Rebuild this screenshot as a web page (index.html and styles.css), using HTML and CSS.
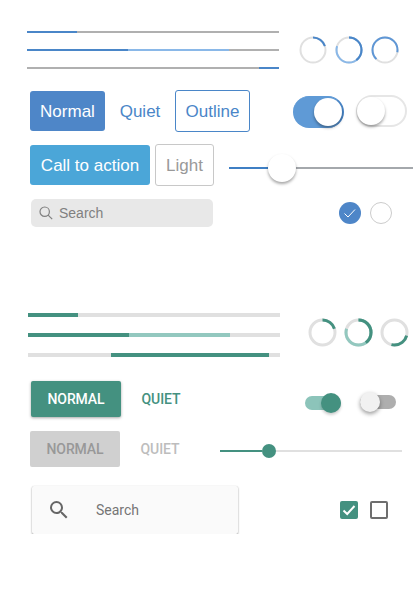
FILE: index.html
```html
<!DOCTYPE html>
<html lang="en">
<head>
<meta charset="UTF-8">
<meta name="viewport" content="width=device-width, initial-scale=1.0">
<title>UI kit</title>
<link rel="stylesheet" href="styles.css">
</head>
<body>

<!-- blue kit -->
<section class="kit kit-blue">
    <div class="row row-progress">
        <div class="bars">
            <div class="bar"><span class="fill" style="width:50px"></span></div>
            <div class="bar"><span class="fill" style="width:101px"></span><span class="fill-soft" style="width:101px"></span></div>
            <div class="bar bar-end"><span class="fill" style="width:20px"></span></div>
        </div>
        <div class="rings">
            <svg class="ring" viewBox="0 0 28 28"><circle class="ring-bg" cx="14" cy="14" r="12.5"/><circle class="ring-main" cx="14" cy="14" r="12.5" pathLength="100" stroke-dasharray="20 80"/></svg>
            <svg class="ring" viewBox="0 0 28 28"><circle class="ring-bg" cx="14" cy="14" r="12.5"/><circle class="ring-soft" cx="14" cy="14" r="12.5" pathLength="100" stroke-dasharray="80 20"/><circle class="ring-main" cx="14" cy="14" r="12.5" pathLength="100" stroke-dasharray="40 60"/></svg>
            <svg class="ring" viewBox="0 0 28 28"><circle class="ring-bg" cx="14" cy="14" r="12.5"/><circle class="ring-mid" cx="14" cy="14" r="12.5" pathLength="100" stroke-dasharray="66 34" stroke-dashoffset="-62"/></svg>
        </div>
    </div>

    <div class="row row-buttons">
        <button class="btn btn-normal">Normal</button>
        <button class="btn btn-quiet">Quiet</button>
        <button class="btn btn-outline">Outline</button>
        <div class="toggle toggle-on"><span class="knob"></span></div>
        <div class="toggle toggle-off"><span class="knob"></span></div>
    </div>

    <div class="row row-cta">
        <button class="btn btn-cta">Call to action</button>
        <button class="btn btn-light">Light</button>
        <div class="slider"><span class="slider-fill"></span><span class="slider-knob"></span></div>
    </div>

    <div class="row row-search">
        <div class="search">
            <svg class="search-icon" viewBox="0 0 14 14"><circle cx="5.7" cy="5.7" r="4.7"/><line x1="9.1" y1="9.1" x2="13.2" y2="13.2"/></svg>
            <span>Search</span>
        </div>
        <span class="radio radio-on"><svg viewBox="0 0 22 22"><polyline points="5.5,11.5 9,15 16,7.5"/></svg></span>
        <span class="radio"></span>
    </div>
</section>

<!-- green kit -->
<section class="kit kit-green">
    <div class="row row-progress">
        <div class="bars">
            <div class="bar"><span class="fill" style="width:50px"></span></div>
            <div class="bar"><span class="fill" style="width:101px"></span><span class="fill-soft" style="width:101px"></span></div>
            <div class="bar"><span class="fill" style="width:158px;margin-left:83px"></span></div>
        </div>
        <div class="rings">
            <svg class="ring" viewBox="0 0 29 29"><circle class="ring-bg" cx="14.5" cy="14.5" r="12.5"/><circle class="ring-main" cx="14.5" cy="14.5" r="12.5" pathLength="100" stroke-dasharray="20 80"/></svg>
            <svg class="ring" viewBox="0 0 29 29"><circle class="ring-bg" cx="14.5" cy="14.5" r="12.5"/><circle class="ring-soft" cx="14.5" cy="14.5" r="12.5" pathLength="100" stroke-dasharray="80 20"/><circle class="ring-main" cx="14.5" cy="14.5" r="12.5" pathLength="100" stroke-dasharray="40 60"/></svg>
            <svg class="ring" viewBox="0 0 29 29"><circle class="ring-bg" cx="14.5" cy="14.5" r="12.5"/><circle class="ring-main" cx="14.5" cy="14.5" r="12.5" pathLength="100" stroke-dasharray="25 75" stroke-dashoffset="-29"/></svg>
        </div>
    </div>

    <div class="row row-buttons">
        <button class="btn btn-normal">NORMAL</button>
        <button class="btn btn-quiet">QUIET</button>
        <div class="switch switch-on"><span class="knob"></span></div>
        <div class="switch switch-off"><span class="knob"></span></div>
    </div>

    <div class="row row-disabled">
        <button class="btn btn-disabled">NORMAL</button>
        <button class="btn btn-quiet-disabled">QUIET</button>
        <div class="slider"><span class="slider-fill"></span><span class="slider-knob"></span></div>
    </div>

    <div class="row row-search">
        <div class="search">
            <svg class="search-icon" viewBox="0 0 24 24"><path d="M15.5 14h-.79l-.28-.27A6.471 6.471 0 0 0 16 9.5 6.5 6.5 0 1 0 9.5 16c1.61 0 3.09-.59 4.23-1.57l.27.28v.79l5 4.99L20.49 19l-4.99-5zm-6 0C7.01 14 5 11.99 5 9.5S7.01 5 9.5 5 14 7.01 14 9.5 11.99 14 9.5 14z"/></svg>
            <span>Search</span>
        </div>
        <span class="check check-on"><svg viewBox="0 0 18 18"><polyline points="3.5,9.5 7.2,13 14.5,5"/></svg></span>
        <span class="check"></span>
    </div>
</section>

</body>
</html>
```

FILE: styles.css
```css
body {
    margin: 0;
    background: #fff;
    font-family: "Liberation Sans", Arial, sans-serif;
}
.row {
    display: flex;
    align-items: flex-start;
}
button {
    border: none;
    padding: 0;
    background: none;
    font-family: inherit;
}
.btn {
    display: block;
    flex: none;
    text-align: center;
}

/* progress, shared */
.bars {
    display: flex;
    flex-direction: column;
    flex: none;
    width: 252px;
}
.bar {
    display: flex;
}
.bar-end {
    justify-content: flex-end;
}
.rings {
    display: flex;
}
.ring {
    display: block;
    flex: none;
    transform: rotate(-90deg);
    fill: none;
}
.slider {
    position: relative;
    flex: none;
}
.slider-fill {
    display: block;
    height: 100%;
}
.slider-knob,
.knob {
    position: absolute;
    border-radius: 50%;
}
.search {
    display: flex;
    align-items: center;
    flex: none;
}

/* blue kit */
.kit-blue {
    padding-top: 31px;
}
.kit-blue .row-progress {
    padding-left: 27px;
}
.kit-blue .bars {
    gap: 16px;
}
.kit-blue .bar {
    height: 2px;
    background: #b0b0b0;
}
.kit-blue .fill {
    background: #4a86c8;
}
.kit-blue .fill-soft {
    background: #8ab8e8;
}
.kit-blue .rings {
    gap: 8px;
    margin: 5px 0 0 20px;
}
.kit-blue .ring {
    width: 28px;
    height: 28px;
    stroke-width: 2px;
}
.kit-blue .ring-bg {
    stroke: #e0e0e0;
}
.kit-blue .ring-main {
    stroke: #4a86c8;
}
.kit-blue .ring-soft {
    stroke: #8ab8e8;
}
.kit-blue .ring-mid {
    stroke: #5f97d6;
}
.kit-blue .row-buttons {
    margin-top: 21px;
    padding-left: 30px;
}
.kit-blue .btn {
    padding-top: 1px;
    font-size: 17px;
    border-radius: 3px;
}
.kit-blue .btn-normal {
    width: 75px;
    height: 40px;
    margin-top: 1px;
    background: #4e86c8;
    color: #fff;
}
.kit-blue .btn-quiet {
    width: 70px;
    height: 40px;
    margin-top: 1px;
    color: #4a86c8;
}
.kit-blue .btn-outline {
    width: 75px;
    height: 42px;
    border: 1px solid #4a86c8;
    color: #4a86c8;
}
.toggle {
    position: relative;
    flex: none;
    box-sizing: border-box;
    height: 32px;
    border-radius: 16px;
}
.toggle-on {
    width: 51px;
    margin: 6px 0 0 43px;
    background: #5f9ad6;
    border-right: 2px solid #4a86c8;
    border-top: 1px solid #5f9ad6;
}
.toggle-on .knob {
    top: 1px;
    left: 21px;
    width: 28px;
    height: 28px;
    background: #fff;
    box-shadow: 0 2px 3px rgba(0, 0, 0, 0.35);
}
.toggle-off {
    width: 51px;
    margin: 5px 0 0 12px;
    background: #fff;
    border: 2px solid #e6e6e6;
}
.toggle-off .knob {
    top: 0;
    left: -1px;
    width: 28px;
    height: 28px;
    background: #fff;
    box-shadow: 0 2px 3px rgba(0, 0, 0, 0.35);
}
.kit-blue .row-cta {
    margin-top: 12px;
    padding-left: 30px;
}
.kit-blue .btn-cta {
    width: 120px;
    height: 40px;
    margin-top: 1px;
    background: #4ba6d8;
    color: #fff;
}
.kit-blue .btn-light {
    width: 59px;
    height: 42px;
    margin-left: 5px;
    border: 1px solid #c8c8c8;
    color: #999;
}
.kit-blue .slider {
    width: 184px;
    height: 2px;
    margin: 23px 0 0 15px;
    background: #a4a8ac;
}
.kit-blue .slider-fill {
    width: 40px;
    background: #3f7fc4;
}
.kit-blue .slider-knob {
    top: -13px;
    left: 39px;
    width: 28px;
    height: 28px;
    background: #fff;
    box-shadow: 0 2px 3px rgba(0, 0, 0, 0.35);
}
.kit-blue .row-search {
    margin-top: 13px;
    padding-left: 31px;
}
.kit-blue .search {
    width: 182px;
    height: 28px;
    box-sizing: border-box;
    padding-left: 8px;
    background: #e8e8e8;
    border-radius: 5px;
    color: #808080;
    font-size: 14px;
}
.kit-blue .search-icon {
    width: 14px;
    height: 14px;
    margin-right: 6px;
    fill: none;
    stroke: #808080;
    stroke-width: 1.2px;
}
.radio {
    flex: none;
    box-sizing: border-box;
    width: 22px;
    height: 22px;
    margin: 3px 0 0 9px;
    background: #fff;
    border: 1px solid #ccc;
    border-radius: 50%;
}
.radio-on {
    margin-left: 126px;
    background: #4e86c8;
    border: none;
}
.radio svg {
    display: block;
    fill: none;
    stroke: #fff;
    stroke-width: 1px;
}

/* green kit */
.kit-green {
    padding-top: 86px;
    font-family: Roboto, sans-serif;
}
.kit-green .row-progress {
    padding-left: 28px;
}
.kit-green .bars {
    gap: 16px;
}
.kit-green .bar {
    height: 4px;
    background: #e0e0e0;
}
.kit-green .fill {
    background: #449180;
}
.kit-green .fill-soft {
    background: #93c8bf;
}
.kit-green .rings {
    gap: 7px;
    margin: 5px 0 0 28px;
}
.kit-green .ring {
    width: 29px;
    height: 29px;
    stroke-width: 3px;
}
.kit-green .ring-bg {
    stroke: #e0e0e0;
}
.kit-green .ring-main {
    stroke: #449180;
}
.kit-green .ring-soft {
    stroke: #93c8bf;
}
.kit-green .row-buttons {
    margin-top: 24px;
    padding-left: 31px;
}
.kit-green .btn {
    height: 36px;
    font-size: 14px;
    font-weight: 500;
    letter-spacing: -0.1px;
    border-radius: 2px;
}
.kit-green .btn-normal {
    width: 90px;
    background: #449180;
    color: #fff;
    box-shadow: 0 1px 3px rgba(0, 0, 0, 0.35);
}
.kit-green .btn-quiet {
    width: 80px;
    color: #449180;
}
.switch {
    position: relative;
    flex: none;
    width: 36px;
    height: 14px;
    border-radius: 7px;
}
.switch .knob {
    top: -3px;
    width: 20px;
    height: 20px;
}
.switch-on {
    margin: 15px 0 0 104px;
    background: #8cc4ba;
}
.switch-on .knob {
    right: 0;
    background: #449180;
    box-shadow: 0 2px 3px rgba(0, 0, 0, 0.2);
}
.switch-off {
    margin: 14px 0 0 19px;
    background: #aeaeae;
}
.switch-off .knob {
    left: 0;
    background: #f1f1f1;
    box-shadow: 0 2px 4px rgba(0, 0, 0, 0.4);
}
.kit-green .row-disabled {
    margin-top: 14px;
    padding-left: 30px;
}
.kit-green .btn-disabled {
    width: 90px;
    background: #d0d0d0;
    color: #989898;
}
.kit-green .btn-quiet-disabled {
    width: 78px;
    margin-left: 1px;
    color: #bdbdbd;
}
.kit-green .slider {
    width: 182px;
    height: 2px;
    margin: 19px 0 0 21px;
    background: #e0e0e0;
}
.kit-green .slider-fill {
    width: 42px;
    background: #449180;
}
.kit-green .slider-knob {
    top: -6px;
    left: 42px;
    width: 14px;
    height: 14px;
    background: #449180;
}
.kit-green .row-search {
    margin-top: 19px;
    padding-left: 32px;
}
.kit-green .search {
    width: 206px;
    height: 48px;
    box-sizing: border-box;
    padding-left: 15px;
    background: #fafafa;
    border-radius: 2px;
    box-shadow: 0 1px 2px rgba(0, 0, 0, 0.4), 0 0 1px rgba(0, 0, 0, 0.12);
    color: #757575;
    font-size: 14px;
}
.kit-green .search-icon {
    width: 24px;
    height: 24px;
    margin-right: 25px;
    fill: #666;
}
.check {
    flex: none;
    box-sizing: border-box;
    width: 18px;
    height: 18px;
    margin: 15px 0 0 12px;
    border: 2px solid #6e6e6e;
    border-radius: 2px;
}
.check-on {
    margin-left: 102px;
    background: #449180;
    border: none;
}
.check svg {
    display: block;
    fill: none;
    stroke: #fff;
    stroke-width: 2px;
}
```
